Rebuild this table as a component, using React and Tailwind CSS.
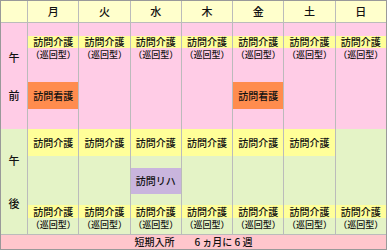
import React from 'react';

const DAYS = ['月', '火', '水', '木', '金', '土', '日'];

const font = { fontFamily: '"Noto Sans CJK JP", "Noto Sans", sans-serif' };

const Junkai = ({ yellowH = 'h-[12px]' }) => (
    <div className="flex flex-col items-stretch">
        <div className={`${yellowH} bg-[#ffff99] flex items-center justify-center text-[10px] leading-none`}>訪問介護</div>
        <div className="h-[13px] flex items-center justify-center text-[9px] leading-none">（巡回型）</div>
    </div>
);

const Morning = ({ day }) => (
    <div className="bg-[#ffcce6] flex flex-col pt-[13px]">
        <Junkai />
        {(day === '月' || day === '金') && (
            <div className="mt-[21px] h-[27px] bg-[#ff8c4e] flex items-center justify-center text-[10px] leading-none">
                訪問看護</div>
        )}
    </div>
);

const Afternoon = ({ day }) => (
    <div className="bg-[#e4f3c6] flex flex-col pb-[3px]">
        {day !== '日' && (
            <div className="h-[27px] bg-[#ffff99] flex items-center justify-center text-[10px] leading-none">訪問介護</div>
        )}
        {day === '水' && (
            <div className="mt-[12px] h-[26px] bg-[#c9b5dd] flex items-center justify-center text-[10px] leading-none">
                訪問リハ</div>
        )}
        <div className="mt-auto">
            <Junkai yellowH="h-[13px]" />
        </div>
    </div>
);

export default function App() {
    return (
        <div className="w-[388px] h-[251px] bg-white text-[#111] font-medium" style={font}>
            <div className="w-[387px] h-[250px] border border-[#999] flex flex-col bg-[#bbb]">
                <div className="grid grid-cols-[26px_repeat(7,minmax(0,1fr))] gap-x-px h-[21px]">
                    <div className="bg-[#ffffcc]"></div>
                    {DAYS.map(d => (
                        <div key={d} className="bg-[#ffffcc] flex items-center justify-center text-[11px] leading-none">{d}</div>
                    ))}
                </div>
                <div className="grid grid-cols-[26px_repeat(7,minmax(0,1fr))] gap-x-px h-[106px] mt-px">
                    <div className="bg-[#ffcce6] flex flex-col items-center pt-[28px] gap-[26px] text-[11px] leading-[12px]">
                        <span>午</span><span>前</span>
                    </div>
                    {DAYS.map(d => <Morning key={d} day={d} />)}
                </div>
                <div className="grid grid-cols-[26px_repeat(7,minmax(0,1fr))] gap-x-px h-[105px]">
                    <div className="bg-[#e4f3c6] flex flex-col items-center pt-[25px] gap-[31px] text-[11px] leading-[12px]">
                        <span>午</span><span>後</span>
                    </div>
                    {DAYS.map(d => <Afternoon key={d} day={d} />)}
                </div>
                <div className="mt-px h-[14px] bg-[#ffc6cc] flex items-center justify-center text-[10px] leading-none whitespace-pre">
                    短期入所{'　　'}6 ヵ月に 6 週</div>
            </div>
        </div>
    );
}
